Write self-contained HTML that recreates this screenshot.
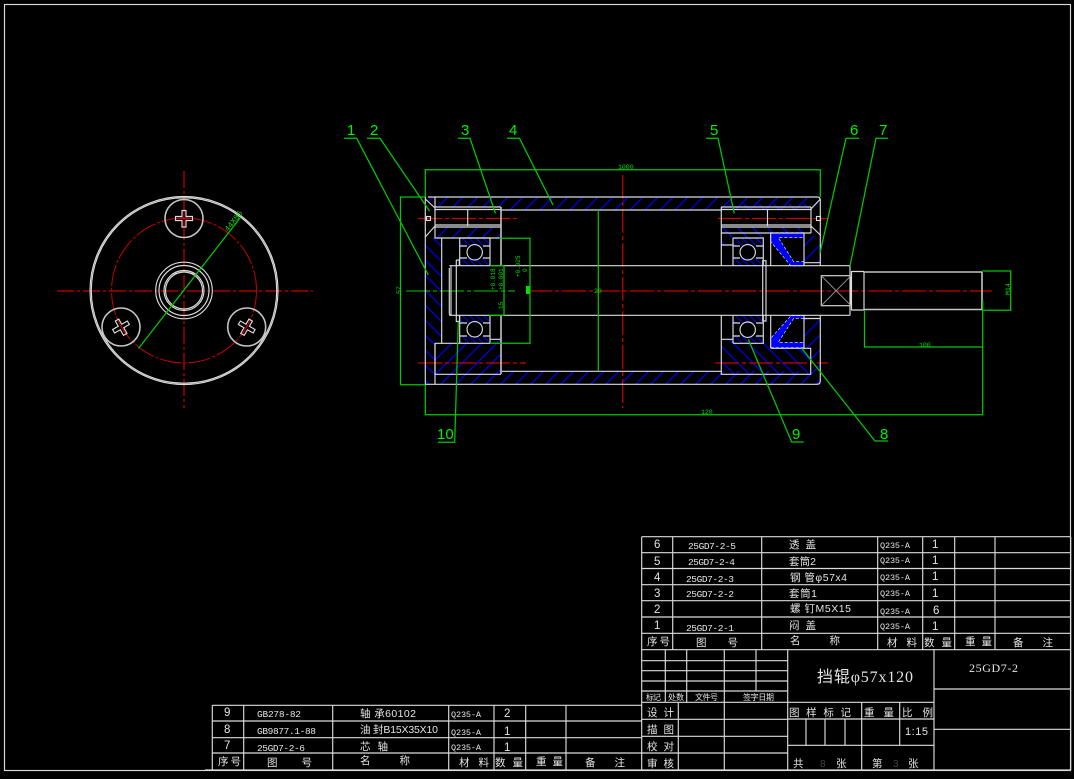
<!DOCTYPE html>
<html><head><meta charset="utf-8"><style>
html,body{margin:0;padding:0;background:#000;width:1074px;height:779px;overflow:hidden}
svg{display:block}
.w{stroke:#dcdcdc;stroke-width:1.15;fill:none}
.W{stroke:#c4c4c4;stroke-width:1.6;fill:none}
.g{stroke:#00c800;stroke-width:1.25;fill:none}
.r{stroke:#c80000;stroke-width:1.2;fill:none}
.x{stroke:#999;stroke-width:.9;fill:none}
text{font-family:"Liberation Mono","Noto Sans CJK SC",monospace;fill:#e4e4e4;font-size:9.5px}
.c{font-family:"Liberation Sans","Noto Sans CJK SC",sans-serif;font-size:10.5px}
.n{font-family:"Liberation Sans",sans-serif;font-size:11.5px}
.q{font-size:8.5px}
.gt{font-family:"Liberation Sans",sans-serif;font-size:15px;fill:#00f000}
.gs{font-family:"Liberation Mono",monospace;font-size:6.5px;fill:#00e000}
</style></head><body>
<svg width="1074" height="779" viewBox="0 0 1074 779" xmlns="http://www.w3.org/2000/svg">
<defs>
<pattern id="a" patternUnits="userSpaceOnUse" width="15" height="15"><path d="M-2 17L17 -2M-2 2L2 -2M13 17L17 13" stroke="#0000f0" stroke-width="1.2"/></pattern>
<pattern id="b" patternUnits="userSpaceOnUse" width="15" height="15"><path d="M-2 -2L17 17M-2 13L2 17M13 -2L17 2" stroke="#0000f0" stroke-width="1.2"/></pattern>
<pattern id="c" patternUnits="userSpaceOnUse" width="7" height="7"><path d="M-1 -1L8 8M-1 6L1 8M6 -1L8 1" stroke="#0000f0" stroke-width="1.1"/></pattern>
</defs>
<rect width="1074" height="779" fill="#000"/>
<!-- frame -->
<rect x="4.500" y="4.500" width="1066" height="766" class="w"/>

<!-- LEFT VIEW -->
<g class="r">
<path d="M57 291H313" stroke-dasharray="17 3 3 3"/>
<path d="M184 171V408" stroke-dasharray="17 3 3 3"/>
<circle cx="184" cy="290.500" r="72.500" stroke-width="1" stroke-dasharray="22 2 3 2"/>
</g>
<g class="w">
<circle cx="184" cy="290.500" r="94"/>
<circle cx="184" cy="290.500" r="92.700"/>
</g>
<g class="W">
<circle cx="184" cy="218.500" r="19"/>
<circle cx="121" cy="327" r="19"/>
<circle cx="246.700" cy="327" r="19"/>
</g>
<g class="w">
<circle cx="184" cy="290.500" r="28.300"/><circle cx="184" cy="290.500" r="25"/><circle cx="184" cy="290.500" r="20"/><circle cx="184" cy="290.500" r="18.500"/>
<path d="M182 210.500h4v6h6.500v4h-6.500v6.500h-4v-6.500h-6.500v-4h6.500z"/>
<path transform="rotate(-30 121 327) translate(-63 108.500)" d="M182 210.500h4v6h6.500v4h-6.500v6.500h-4v-6.500h-6.500v-4h6.500z"/>
<path transform="rotate(30 246.700 327) translate(62.700 108.500)" d="M182 210.500h4v6h6.500v4h-6.500v6.500h-4v-6.500h-6.500v-4h6.500z"/>
</g>
<path d="M184 212V225M177 218.500H191" stroke="#c80000" stroke-width="1"/>
<path d="M118 321L125 333M243 333L250 321" stroke="#c80000" stroke-width="1"/>
<path class="g" d="M138.500 348.500L240 218"/>
<text class="gs" transform="translate(228 232) rotate(-52)" style="font-size:8px">44X85</text>

<!-- HATCHES -->
<path fill="url(#a)" d="M429 197H820V207H811V210H721H501V207H435V211H429Z"/>
<rect x="435" y="227" width="66" height="11" fill="url(#a)"/>
<rect x="721" y="204" width="90" height="6" fill="url(#b)"/>
<rect x="721" y="227" width="90" height="6" fill="url(#b)"/>
<path fill="url(#b)" d="M721 233H770V238H733V245H721Z"/>
<path fill="url(#b)" d="M425.500 238H441.500V343H435V384H425.500Z"/>
<path fill="url(#a)" d="M435 343H490V339H501V371H810V384H435Z"/>
<path fill="url(#b)" d="M721 339H733V343H770V348H810V374H721Z"/>
<rect x="804" y="236" width="16" height="26" fill="url(#a)"/>
<path fill="url(#a)" d="M804 318H820V384H811V348H804Z"/>
<g fill="url(#c)">
<rect x="460" y="238" width="30" height="8"/><rect x="460" y="258" width="30" height="8"/>
<rect x="460" y="315.500" width="30" height="8"/><rect x="460" y="336" width="30" height="7"/>
<rect x="733" y="238" width="30" height="8"/><rect x="733" y="258" width="30" height="8"/>
<rect x="733" y="315.500" width="30" height="8"/><rect x="733" y="336" width="30" height="7"/>
</g>
<!-- seals -->
<g fill="#0000ff" stroke="#fff" stroke-width=".6" stroke-dasharray="3 2">
<path d="M770.700 232.700H804V237.700H778.300L793.700 261.700H804V266H791L770.700 241.700Z"/>
<path d="M770.700 347.700H804V342.300H778.300L793.700 318.300H804V315.700H791L770.700 338.300Z"/>
</g>

<!-- centre lines -->
<path d="M406 291H515" stroke="#00a000" stroke-width="1.2" stroke-dasharray="24 3 4 3"/>
<path class="r" d="M528 291H992" stroke-dasharray="24 3 4 3"/>
<path class="r" d="M622.700 175V408" stroke-dasharray="24 3 4 3"/>
<path class="r" d="M418 218.500H517M718 218.500H828M418 363H526M715 363H828" stroke-dasharray="24 3 4 3"/>

<!-- BODY LINES -->
<g class="w">
<path d="M428 197H817Q820.300 197 820.300 200V266M820.300 315V381Q820.300 384.300 817 384.300H425.300V197"/>
<path d="M435 197V238H501M441.700 238V343M435 343V384.300"/>
<path d="M501 210H721M501 371.300H721"/>
<path d="M435 207H501M435 209.500H501M435 225H501M435 227H501"/>
<path d="M721 207H811M721 209.500H811M721 225H811M721 227H811M721 233H811M811 207V233"/>
<path d="M467.700 209.500V226M767.500 209.500V226"/>
<path d="M425.300 199L435 208M425.300 237L435 226M811 209L820.300 199M811 226L820.300 235"/>
<rect x="426.500" y="216.500" width="4" height="4"/><rect x="816.500" y="216.500" width="4" height="4"/>
<path d="M721.300 207V266M721.300 315V374.300H810.700V348.300H770.700M721.300 339.300H733M721.300 245H733"/>
<path d="M435 343.300H490M490 339.300H501M435 374.300H501M435 343.300V374.300"/>
<path d="M449.300 265.700H850M449.300 315.300H850"/>
<path d="M449.300 268V313Q449.300 315 451 315.300M451 266V315M456.300 260V321.500H459.300M456.300 260H459.300V266M459.500 315V321.500"/>
<path d="M762.700 260.700H766V321H762.700ZM766 266V315"/>
<path d="M770.700 232.700V266M770.700 315.500V348M804 233V266M804 315.500V348M804 262.700H820M804 318.500H820"/>
<path d="M459.700 238H490V266M459.700 238V266M459.700 315.500V343.300M490 315.500V343.300"/>
<path d="M460 246H467M483 246H490M460 258H467M483 258H490M460 323H467M483 323H490M460 336H467M483 336H490"/>
<path d="M733 238H763.300V266M733 238V266M733 315.500V343.300M763.300 315.500V343.300H733"/>
<path d="M733 246H740M756 246H763M733 258H740M756 258H763M733 323H740M756 323H763M733 336H740M756 336H763"/>
<circle cx="474.700" cy="252.300" r="7.700"/><circle cx="474.700" cy="329.300" r="7.700"/>
<circle cx="747.700" cy="252.300" r="7.700"/><circle cx="747.700" cy="329.700" r="7.700"/>
<path d="M850 266V315.500M851.500 271V310.500M851.500 271.500H864M851.500 310H864M864 271.500V310"/>
<rect x="821.300" y="275.700" width="29.700" height="30"/>
</g>
<path class="W" d="M501 207V266M501 315V374M864 272H982M864 309.500H982M982 272V309.500" />
<path class="x" d="M821.300 275.700L851 305.700M851 275.700L821.300 305.700"/>

<!-- GREEN DIMENSIONS -->
<g class="g">
<path d="M425.300 197V169.700H820.300V197"/>
<path d="M425 197H400.500V384.700H425"/>
<path d="M425.300 385V414.700H982.700V300"/>
<path d="M864.500 310V347H982.700"/>
<path d="M982 271H1010.700V310.300H982"/>
<path d="M598.300 210V371.300"/>
<path d="M499 238.300H530V343.300H490"/>
<path d="M490 265.700H504V315.300H489"/>
<path d="M344 138.300H356.700L428.300 275"/>
<path d="M367 138.300H380L429.500 211"/>
<path d="M458 138.300H470L495.500 213.500"/>
<path d="M507 138.300H519.500L553 205"/>
<path d="M706 138.300H718L734.300 213.500"/>
<path d="M859 138.300H846L820 253"/>
<path d="M888 138.300H876L850 266"/>
<path d="M888 441H875L801.700 348.300"/>
<path d="M803.700 442H791.700L748.300 339.300"/>
<path d="M438 442.300H454.700L458.300 321.700"/>
</g>
<rect x="526" y="286" width="3.500" height="8" fill="#00e000"/>
<g>
<text class="gt" x="347" y="135">1</text>
<text class="gt" x="370" y="135">2</text>
<text class="gt" x="461" y="135">3</text>
<text class="gt" x="509" y="135">4</text>
<text class="gt" x="710" y="135">5</text>
<text class="gt" x="850" y="135">6</text>
<text class="gt" x="879" y="135">7</text>
<text class="gt" x="880" y="439">8</text>
<text class="gt" x="792" y="439">9</text>
<text class="gt" x="437" y="439">10</text>
<text class="gs" x="618" y="169">1000</text>
<text class="gs" x="701" y="414">120</text>
<text class="gs" x="919" y="347">100</text>
<text class="gs" transform="translate(1010 295) rotate(-90)">M14</text>
<text class="gs" transform="translate(401 294) rotate(-90)">57</text>
<text class="gs" x="594" y="293">20</text>
<text class="gs" transform="translate(495 290) rotate(-90)" style="font-size:6px">+0.018</text>
<text class="gs" transform="translate(503 290) rotate(-90)" style="font-size:6px">+0.001</text>
<text class="gs" transform="translate(520 277) rotate(-90)" style="font-size:6px">+0.025</text>
<text class="gs" transform="translate(527 272) rotate(-90)" style="font-size:6px">0</text>
<text class="gs" transform="translate(503 309) rotate(-90)" style="font-size:6px">15</text>
</g>

<!-- TABLE RIGHT -->
<g class="w">
<path d="M641.700 536.700H1070.700M641.700 552.700H1070.700M641.700 568.500H1070.700M641.700 584.700H1070.700M641.700 600.700H1070.700M641.700 617H1070.700M641.700 633.300H1070.700M641.700 649.700H1070.700"/>
<path d="M641.700 536.700V770M672.700 536.700V649.700M761.700 536.700V649.700M877.700 536.700V649.700M922.700 536.700V649.700M954.700 536.700V649.700M995 536.700V649.700M1070.700 536.700V770"/>
<!-- title block -->
<path d="M641.700 660.700H787.700M641.700 670.700H787.700M641.700 681H787.700M641.700 691H787.700M641.700 702.300H934"/>
<path d="M665.300 649.700V702.300M686.700 649.700V702.300M724.300 649.700V770M756 649.700V691M678.300 702.300V770M787.700 649.700V770M934 649.700V770"/>
<path d="M641.700 719.300H787.700M641.700 736.300H787.700M641.700 753H787.700M205 770H1070.700"/>
<path d="M787.700 719H934M787.700 745.300H934M861.700 702.300V770M899.700 702.300V745.300"/>
<path d="M806 719V745.300M825 719V745.300M845 719V745.300"/>
<path d="M934 689H1070.700M934 729.300H1070.700"/>
<!-- table left -->
<path d="M212.300 705.300H641.700M212.300 721H641.700M212.300 737.700H641.700M212.300 753H641.700"/>
<path d="M212.300 705.300V770M243.700 705.300V770M332.700 705.300V770M448.700 705.300V770M494 705.300V770M525.700 705.300V770M566 705.300V770"/>
</g>

<!-- right table text -->
<g>
<text class="n" x="654" y="548">6</text><text x="688" y="549" textLength="48">25GD7-2-5</text><text class="c" x="789" y="548" textLength="27">透 盖</text><text class="q" x="880" y="548" textLength="30">Q235-A</text><text class="n" x="932" y="548">1</text>
<text class="n" x="654" y="565">5</text><text x="688" y="565" textLength="47">25GD7-2-4</text><text class="c" x="789" y="565" textLength="27">套筒2</text><text class="q" x="880" y="563" textLength="30">Q235-A</text><text class="n" x="932" y="564">1</text>
<text class="n" x="654" y="581">4</text><text x="686" y="582" textLength="48">25GD7-2-3</text><text class="c" x="790" y="581" textLength="57">钢 管φ57x4</text><text class="q" x="880" y="580" textLength="30">Q235-A</text><text class="n" x="932" y="580">1</text>
<text class="n" x="654" y="597">3</text><text x="686" y="597" textLength="48">25GD7-2-2</text><text class="c" x="789" y="597" textLength="28">套筒1</text><text class="q" x="880" y="596" textLength="30">Q235-A</text><text class="n" x="932" y="597">1</text>
<text class="n" x="654" y="613">2</text><text class="c" x="790" y="612" textLength="61">螺 钉M5X15</text><text class="q" x="880" y="614" textLength="30">Q235-A</text><text class="n" x="933" y="614">6</text>
<text class="n" x="654" y="629">1</text><text x="686" y="631" textLength="48">25GD7-2-1</text><text class="c" x="789" y="629" textLength="27">闷 盖</text><text class="q" x="880" y="629" textLength="30">Q235-A</text><text class="n" x="932" y="630">1</text>
<text class="c" x="647" y="645" textLength="23">序号</text><text class="c" x="696" y="646" textLength="42">图&#12288;&#12288;号</text><text class="c" x="790" y="644" textLength="50">名&#12288;&#12288;称</text><text class="c" x="887" y="646" textLength="30">材 料</text><text class="c" x="924" y="646" textLength="28">数 量</text><text class="c" x="965" y="645" textLength="27">重 量</text><text class="c" x="1013" y="646" textLength="40">备&#12288;注</text>
</g>

<!-- title block text -->
<g>
<text class="c" x="646" y="700" textLength="15" style="font-size:8px">标记</text>
<text class="c" x="668" y="700" textLength="16" style="font-size:8px">处数</text>
<text class="c" x="695" y="700" textLength="23" style="font-size:8px">文件号</text>
<text class="c" x="743" y="700" textLength="31" style="font-size:8px">签字日期</text>
<text class="c" x="647" y="716" textLength="27">设 计</text>
<text class="c" x="647" y="733" textLength="27">描 图</text>
<text class="c" x="647" y="750" textLength="27">校 对</text>
<text class="c" x="647" y="767" textLength="27">审 核</text>
<text class="c" x="789" y="716" textLength="62">图 样 标 记</text>
<text class="c" x="864" y="716" textLength="30">重 量</text>
<text class="c" x="902" y="716" textLength="31">比 例</text>
<text class="n" x="905" y="735" textLength="23" style="font-size:11px">1:15</text>
<text class="c" x="793" y="767">共</text><text class="n" x="820" y="767" style="fill:#444;font-size:10px">8</text><text class="c" x="836" y="767">张</text>
<text class="c" x="872" y="767">第</text><text class="n" x="893" y="767" style="fill:#444;font-size:10px">3</text><text class="c" x="908" y="767">张</text>
<text class="c" x="817" y="682" textLength="96" style="font-size:16px;font-family:'Liberation Serif','Noto Sans CJK SC',serif">挡辊φ57x120</text>
<text x="969" y="672" textLength="49" style="font-size:12px;font-family:'Liberation Serif',serif">25GD7-2</text>
</g>

<!-- left table text -->
<g>
<text class="n" x="224" y="716">9</text><text x="257" y="717" textLength="44">GB278-82</text><text class="c" x="360" y="717" textLength="56">轴 承60102</text><text class="q" x="451" y="717" textLength="30">Q235-A</text><text class="n" x="504" y="717">2</text>
<text class="n" x="224" y="733">8</text><text x="257" y="734" textLength="59">GB9877.1-88</text><text class="c" x="360" y="733" textLength="78">油 封B15X35X10</text><text class="q" x="451" y="735" textLength="30">Q235-A</text><text class="n" x="504" y="735">1</text>
<text class="n" x="224" y="749">7</text><text x="257" y="751" textLength="48">25GD7-2-6</text><text class="c" x="360" y="750" textLength="28">芯 轴</text><text class="q" x="451" y="750" textLength="30">Q235-A</text><text class="n" x="504" y="751">1</text>
<text class="c" x="218" y="765" textLength="23">序号</text><text class="c" x="267" y="766" textLength="45">图&#12288;&#12288;号</text><text class="c" x="360" y="764" textLength="50">名&#12288;&#12288;称</text><text class="c" x="459" y="766" textLength="30">材 料</text><text class="c" x="495" y="766" textLength="28">数 量</text><text class="c" x="536" y="765" textLength="27">重 量</text><text class="c" x="585" y="766" textLength="40">备&#12288;注</text>
</g>
</svg>
</body></html>
